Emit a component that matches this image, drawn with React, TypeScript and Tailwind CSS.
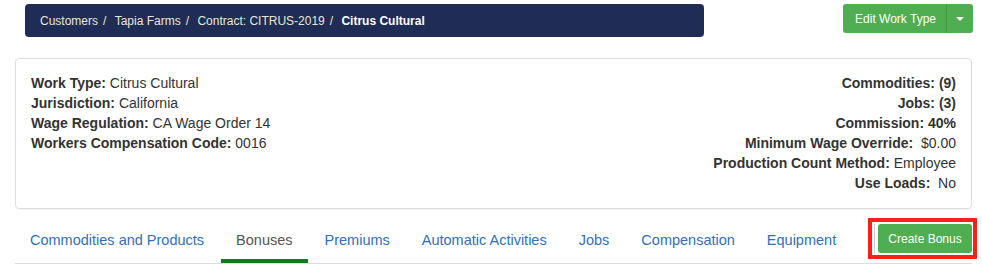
import React from 'react';

const crumbs = ['Customers', 'Tapia Farms', 'Contract: CITRUS-2019'];

const tabs = [
  { label: 'Commodities and Products' },
  { label: 'Bonuses', active: true },
  { label: 'Premiums' },
  { label: 'Automatic Activities' },
  { label: 'Jobs' },
  { label: 'Compensation' },
  { label: 'Equipment' },
];

const App: React.FC = () => {
  return (
    <div className="w-[982px] h-[270px] bg-white font-['Liberation_Sans',Arial,sans-serif] text-[#333] pl-[15px] pr-[10px] pt-[4px]">
      {/* Top row: breadcrumb + action */}
      <div className="flex items-start justify-between">
        <div className="ml-[10px] w-[679px] h-[33px] rounded-[4px] bg-[#1e2c56] flex items-center pl-[15px] text-[12px] text-[#ece7d2]">
          {crumbs.map((c) => (
            <React.Fragment key={c}>
              <span>{c}</span>
              <span className="px-[5px]">/&nbsp;</span>
            </React.Fragment>
          ))}
          <span className="font-bold text-white">Citrus Cultural</span>
        </div>
        <div className="flex h-[29px] rounded-[3px] bg-[#4fae52] text-white text-[12px] mr-[-1px]">
          <button className="pl-[12px] pr-[10px] border-r border-[#43993f]">Edit Work Type</button>
          <button className="w-[26px] flex items-center justify-center">
            <span className="w-0 h-0 border-x-[4px] border-x-transparent border-t-[4px] border-t-white" />
          </button>
        </div>
      </div>

      {/* Details card */}
      <div className="mt-[21px] border border-[#ddd] rounded-[4px] pl-[15px] pr-[15px] pt-[14px] pb-[15px] flex justify-between text-[14px] leading-[20px] shadow-[0_1px_1px_rgba(0,0,0,0.04)]">
        <div>
          <div><b>Work Type:</b> Citrus Cultural</div>
          <div><b>Jurisdiction:</b> California</div>
          <div><b>Wage Regulation:</b> CA Wage Order 14</div>
          <div><b>Workers Compensation Code:</b> 0016</div>
        </div>
        <div className="text-right">
          <div><b>Commodities: (9)</b></div>
          <div><b>Jobs: (3)</b></div>
          <div><b>Commission: 40%</b></div>
          <div><b>Minimum Wage Override:</b>&nbsp; $0.00</div>
          <div><b>Production Count Method:</b> Employee</div>
          <div><b>Use Loads:</b>&nbsp; No</div>
        </div>
      </div>

      {/* Tabs */}
      <div className="mt-[11px] flex items-start border-b border-[#ddd]">
        {tabs.map((t) => (
          <a
            key={t.label}
            className={
              t.active
                ? 'mr-[2px] px-[15px] pt-[10px] pb-[9px] text-[14.5px] leading-[20px] text-[#555] border-b-4 border-[#17791f]'
                : 'mr-[2px] px-[15px] pt-[10px] pb-[9px] text-[14.5px] leading-[20px] text-[#3370b5] border-b-4 border-transparent'
            }
          >
            {t.label}
          </a>
        ))}
        <div className="ml-auto -mt-[2px] -mr-[5px] border-4 border-[#ff1f1a] pl-[2px] pt-[2px] pb-[2px] pr-[1px]">
          <div className="border-l border-[#cfcfcf] pl-[3px]">
            <button className="w-[94px] h-[29px] rounded-[3px] bg-[#4fae52] text-white text-[12px]">
              Create Bonus
            </button>
          </div>
        </div>
      </div>
    </div>
  );
};

export default App;
